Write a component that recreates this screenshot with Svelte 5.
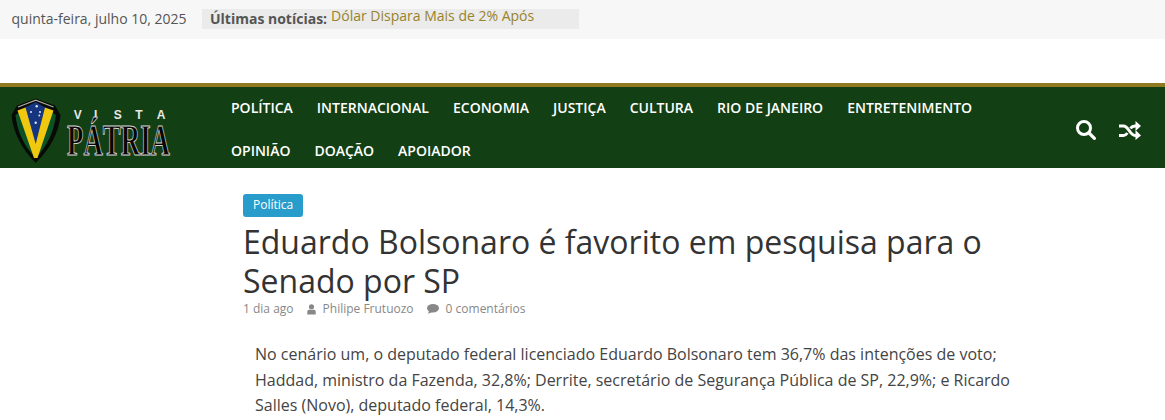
<script lang="ts">
	const navRows = ['Política', 'Internacional', 'Economia', 'Justiça', 'Cultura', 'Rio de Janeiro', 'Entretenimento', 'Opinião', 'Doação', 'Apoiador'];
	const vista = [
		{ ch: 'V', x: 66.7 },
		{ ch: 'I', x: 84.7 },
		{ ch: 'S', x: 106.7 },
		{ ch: 'T', x: 128 },
		{ ch: 'A', x: 150 }
	];
</script>

<div class="page">
	<div class="topbar">
		<span class="date">quinta-feira, julho 10, 2025</span>
		<div class="ticker">
			<strong>Últimas notícias:</strong>
			<a href="#news">Dólar Dispara Mais de 2% Após</a>
		</div>
	</div>

	<header class="nav">
		<div class="logo">
			<svg width="165" height="66" viewBox="0 0 165 66">
				<!-- Shield -->
				<path d="M24.7 0.5 L44 7.5 L49.5 17 Q47 43 24.7 65 Q3 43 0.5 17 L6 7.5 Z" fill="#070a06" />
				<path d="M4.5 17 Q7 42 24.7 60 Q42 42 45 17 L38 12 L12 12 Z" fill="#0b5224" />
				<path d="M13 10 L24.7 4 L35 10 L26 50 L24 50 Z" fill="#16357f" />
				<path d="M7 9 L24.7 2.2 L42.5 9" fill="none" stroke="#a8a8a0" stroke-width="1.3" />
				<path d="M6.5 12.5 L14.5 9.5 L24.7 46 L34 9.5 L42.5 12.5 L26.5 60 L23 60 Z" fill="#f0c80f" />
				<g fill="#dfe6f5">
					<circle cx="25.7" cy="8.3" r="1.2" />
					<circle cx="20" cy="14" r="1" />
					<circle cx="29" cy="14" r="1" />
					<circle cx="28.3" cy="17.5" r="0.9" />
					<circle cx="24.7" cy="24.7" r="1.2" />
				</g>
				<!-- Wordmark -->
				{#each vista as l}
					<text class="vista" x={l.x} y="20.5">{l.ch}</text>
				{/each}
				<text class="patria" x="56" y="57" textLength="103" lengthAdjust="spacingAndGlyphs">PÁTRIA</text>
			</svg>
		</div>
		<nav class="menu">
			{#each navRows as item}
				<a href="#item">{item}</a>
			{/each}
		</nav>
		<div class="actions">
			<svg width="20" height="20" viewBox="0 0 20 20" fill="none" stroke="#fff">
				<circle cx="8" cy="8" r="6.5" stroke-width="3" />
				<path d="M13 13 L18.4 18.4" stroke-width="3.2" stroke-linecap="round" />
			</svg>
			<svg width="22" height="19" viewBox="0 0 22 19" fill="none" stroke="#fff">
				<path d="M0 5 H4.5 C9.5 5 11 14.5 16 14.5 H18" stroke-width="3" />
				<path d="M0 14.5 H4.5 C6.2 14.5 7.4 13.4 8.4 12 M11.4 7.4 C12.5 6 14 5 16 5 H18" stroke-width="3" />
				<path d="M16.5 0 L22 5 L16.5 10 Z M16.5 9 L22 14.5 L16.5 19 Z" fill="#fff" stroke="none" />
			</svg>
		</div>
	</header>

	<main class="article">
		<a class="badge" href="#cat">Política</a>
		<h1>Eduardo Bolsonaro é favorito em pesquisa para o Senado por SP</h1>
		<div class="meta">
			<span>1 dia ago</span>
			<span class="with-icon">
				<svg width="9" height="11" viewBox="0 0 9 11" fill="#888"><circle cx="4.5" cy="2.8" r="2.6" /><path d="M0.3 10.5 V7.6 Q0.3 5.6 2.4 5.4 Q4.5 6.6 6.6 5.4 Q8.7 5.6 8.7 7.6 V10.5 Z" /></svg>
				Philipe Frutuozo
			</span>
			<span class="with-icon">
				<svg width="12" height="10" viewBox="0 0 12 10" fill="#888"><ellipse cx="6" cy="4.2" rx="6" ry="4.2" /><path d="M2.2 6.5 L1 9.8 L5.5 8 Z" /></svg>
				0 comentários
			</span>
		</div>
		<p>No cenário um, o deputado federal licenciado Eduardo Bolsonaro tem 36,7% das intenções de voto; Haddad, ministro da Fazenda, 32,8%; Derrite, secretário de Segurança Pública de SP, 22,9%; e Ricardo Salles (Novo), deputado federal, 14,3%.</p>
	</main>
</div>

<style>
	:global(body) {
		margin: 0;
		background: #fff;
		overflow: hidden;
	}

	.page {
		font-family: 'Open Sans', sans-serif;
		height: 420px;
		overflow: hidden;
	}

	a {
		text-decoration: none;
	}

	.topbar {
		display: flex;
		align-items: flex-start;
		height: 39px;
		padding: 9px 0 0 11.5px;
		box-sizing: border-box;
		background: #f7f7f7;
		font-size: 14px;
		color: #555;
	}

	.date {
		line-height: 20px;
		margin-right: 15.5px;
	}

	.ticker {
		display: flex;
		width: 377px;
		height: 20px;
		padding-left: 8px;
		box-sizing: border-box;
		background: #ebebeb;
		line-height: 20px;
	}

	.ticker strong {
		font-weight: 700;
		margin-right: 4px;
	}

	.ticker a {
		color: #98832a;
		line-height: 14px;
	}

	.nav {
		display: flex;
		height: 85px;
		margin-top: 44px;
		box-sizing: border-box;
		border-top: 4px solid #8f7a1f;
		background: #133f14;
	}

	.logo {
		width: 219px;
		padding: 11px 0 0 11px;
		box-sizing: border-box;
	}

	.logo svg {
		display: block;
		overflow: visible;
	}

	.vista {
		font: 700 12px 'Liberation Sans', sans-serif;
		fill: #e8e8e8;
		text-anchor: middle;
	}

	.patria {
		font: 700 44px 'Liberation Serif', serif;
		fill: #040404;
		stroke: #d4d4d4;
		stroke-width: 1;
	}

	.menu {
		display: flex;
		flex-wrap: wrap;
		flex: 1;
		align-content: flex-start;
		margin-top: -1px;
		max-width: 790px;
	}

	.menu a {
		padding: 0 12px;
		line-height: 43px;
		font-size: 14px;
		font-weight: 600;
		color: #fff;
		text-transform: uppercase;
	}

	.actions {
		display: flex;
		align-items: center;
		gap: 23px;
		margin-left: auto;
		padding: 5px 24px 0 0;
	}

	.article {
		width: 780px;
		margin-left: 243px;
		padding-top: 26px;
	}

	.badge {
		display: inline-block;
		padding: 0 10px;
		height: 23px;
		line-height: 22px;
		border-radius: 3px;
		background: #289dcc;
		color: #fff;
		font-size: 12px;
		vertical-align: top;
	}

	h1 {
		margin: 5px 0 0;
		font-size: 32px;
		font-weight: 400;
		line-height: 39px;
		color: #333;
	}

	.meta {
		display: flex;
		gap: 13px;
		font-size: 12px;
		line-height: 18px;
		color: #888;
	}

	.with-icon {
		display: inline-flex;
		align-items: center;
		gap: 7px;
	}

	p {
		margin: 24px 0 0 12px;
		font-size: 16px;
		line-height: 25.6px;
		color: #444;
	}
</style>
